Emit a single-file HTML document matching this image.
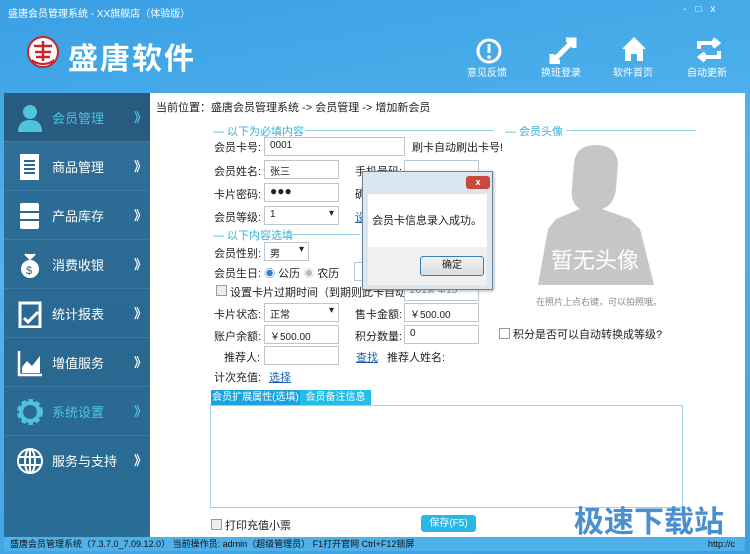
<!DOCTYPE html>
<html><head><meta charset="utf-8"><style>
*{margin:0;padding:0;box-sizing:border-box}
body{width:750px;height:554px;overflow:hidden;position:relative;font-family:"Liberation Sans","Noto Sans CJK SC",sans-serif;font-size:11px;color:#222;background:linear-gradient(170deg,#3aa0e4 0%,#52b4ee 40%,#3c9fe0 100%)}
.a{position:absolute}
.side{left:4px;top:93px;width:146px;height:444px;background:linear-gradient(180deg,#2f6f99,#2a6890 60%,#2a6d96)}
.it{position:absolute;left:0;width:146px;height:49px;border-bottom:1px solid #3b7aa3;color:#fff;font-size:13px}
.it span{position:absolute;left:48px;top:15px}
.it b{position:absolute;left:130px;top:14px;font-weight:bold;font-size:13px}
.it svg{position:absolute;left:12px;top:11px}
.main{left:150px;top:93px;width:595px;height:444px;background:#fff}
.lbl{position:absolute;font-size:11px;color:#222}
.in{position:absolute;height:19px;border:1px solid #bcc6cf;background:#fff;font-size:10px;padding:2px 5px}
.sel::after{content:"▾";position:absolute;right:4px;top:1px;font-size:10px}
.sec{position:absolute;color:#3bb0d8;font-size:11px}
.line{position:absolute;height:1px;background:#8fd0e8}
.lnk{color:#1a5fb4;text-decoration:underline;position:absolute}
.cb{position:absolute;width:11px;height:11px;border:1px solid #999;background:#eee}
</style></head><body>
<div class="a" style="left:8px;top:5px;color:#fff;font-size:10px">盛唐会员管理系统 - XX旗舰店（体验版）</div>
<div class="a" style="left:683px;top:4px;width:60px;height:14px;color:#fff;font-size:10px;letter-spacing:9px">-□x</div>
<svg class="a" style="left:26px;top:35px" width="34" height="34"><circle cx="17" cy="17" r="15" fill="#fff" stroke="#c8262e" stroke-width="2"/><path d="M8 11h18M9 17h16M10 22h14M17 6v20" stroke="#c8262e" stroke-width="2.5" fill="none"/><path d="M6 24q11 8 22 0v3q-11 6-22 0z" fill="#c8262e"/></svg>
<div class="a" style="left:68px;top:34px;color:#fff;font-size:30px;font-weight:bold;letter-spacing:2px">盛唐软件</div>
<svg class="a" style="left:475px;top:37px" width="28" height="28"><circle cx="14" cy="14" r="11" fill="none" stroke="#fff" stroke-width="3"/><rect x="12.5" y="7" width="3" height="9" fill="#fff"/><circle cx="14" cy="20" r="1.8" fill="#fff"/></svg>
<div class="a" style="left:467px;top:64px;color:#fff;font-size:10px">意见反馈</div>
<svg class="a" style="left:548px;top:36px" width="30" height="28"><path d="M4 26L26 4M18 4h8v8M4 18v8h8" stroke="#fff" stroke-width="5" fill="none"/></svg>
<div class="a" style="left:541px;top:64px;color:#fff;font-size:10px">换班登录</div>
<svg class="a" style="left:620px;top:35px" width="28" height="28"><path d="M14 2L26 14h-3v12h-6v-7h-6v7H5V14H2z" fill="#fff"/></svg>
<div class="a" style="left:613px;top:64px;color:#fff;font-size:10px">软件首页</div>
<svg class="a" style="left:695px;top:37px" width="28" height="26"><path d="M4 12V6h18M18 2l5 4-5 4M24 14v6H6M10 16l-5 4 5 4" stroke="#fff" stroke-width="4" fill="none"/></svg>
<div class="a" style="left:687px;top:64px;color:#fff;font-size:10px">自动更新</div>

<div class="a side">
<div class="it" style="top:0;background:#275b80"><svg width="28" height="28"><circle cx="14" cy="8" r="7" fill="#4ec4dc"/><path d="M2 28q0-12 12-12t12 12z" fill="#4ec4dc"/></svg><span style="color:#4ec4dc">会员管理</span><b style="color:#4ec4dc">》</b></div>
<div class="it" style="top:49px"><svg width="28" height="28"><rect x="4" y="1" width="19" height="26" fill="#fff"/><path d="M8 8h11M8 12h11M8 16h11M8 20h11" stroke="#2a6890" stroke-width="2"/></svg><span>商品管理</span><b>》</b></div>
<div class="it" style="top:98px"><svg width="28" height="28"><rect x="4" y="1" width="19" height="26" rx="2" fill="#fff"/><path d="M4 10h19M4 18h19" stroke="#2a6890" stroke-width="2"/></svg><span>产品库存</span><b>》</b></div>
<div class="it" style="top:147px"><svg width="28" height="28"><circle cx="14" cy="18" r="9" fill="#fff"/><path d="M9 3l5 5 5-5" fill="#fff" stroke="#fff" stroke-width="2"/><text x="10" y="23" font-size="11" fill="#2a6890" font-family="Liberation Sans">$</text></svg><span>消费收银</span><b>》</b></div>
<div class="it" style="top:196px"><svg width="28" height="28"><rect x="4" y="3" width="20" height="24" fill="none" stroke="#fff" stroke-width="3"/><path d="M8 18l4 4 10-10" stroke="#fff" stroke-width="3" fill="none"/></svg><span>统计报表</span><b>》</b></div>
<div class="it" style="top:245px"><svg width="28" height="28"><path d="M3 2v24h23" stroke="#fff" stroke-width="2.5" fill="none"/><path d="M6 24V18l5-6 5 5 8-10v17z" fill="#fff"/></svg><span>增值服务</span><b>》</b></div>
<div class="it" style="top:294px"><svg width="28" height="28"><circle cx="14" cy="14" r="10" fill="none" stroke="#4ec4dc" stroke-width="6" stroke-dasharray="4 2.5"/><circle cx="14" cy="14" r="9" fill="none" stroke="#4ec4dc" stroke-width="4"/></svg><span style="color:#4ec4dc">系统设置</span><b style="color:#4ec4dc">》</b></div>
<div class="it" style="top:343px;border:0"><svg width="28" height="28"><circle cx="14" cy="14" r="12" fill="none" stroke="#fff" stroke-width="2"/><ellipse cx="14" cy="14" rx="5" ry="12" fill="none" stroke="#fff" stroke-width="2"/><path d="M2 10h24M2 18h24M14 2v24" stroke="#fff" stroke-width="2"/></svg><span>服务与支持</span><b>》</b></div>
</div>

<div class="a main">
<div class="lbl" style="left:6px;top:6px">当前位置：盛唐会员管理系统 -&gt; 会员管理 -&gt; 增加新会员</div>
<div class="sec" style="left:63px;top:30px">— 以下为必填内容</div><div class="line" style="left:155px;top:37px;width:188px"></div>
<div class="sec" style="left:355px;top:30px">— 会员头像</div><div class="line" style="left:416px;top:37px;width:130px"></div>
<div class="lbl" style="left:64px;top:46px">会员卡号:</div><div class="in" style="left:114px;top:44px;width:141px">0001</div><div class="lbl" style="left:262px;top:46px">刷卡自动刷出卡号!</div>
<div class="lbl" style="left:64px;top:70px">会员姓名:</div><div class="in" style="left:114px;top:67px;width:75px">张三</div><div class="lbl" style="left:205px;top:70px">手机号码:</div><div class="in" style="left:254px;top:67px;width:75px"></div>
<div class="lbl" style="left:64px;top:93px">卡片密码:</div><div class="in" style="left:114px;top:90px;width:75px;font-size:12px;padding-top:0">●●●</div><div class="lbl" style="left:205px;top:93px">确</div>
<div class="lbl" style="left:64px;top:116px">会员等级:</div><div class="in sel" style="left:114px;top:113px;width:75px">1</div><div class="lnk" style="left:205px;top:116px">设</div>
<div class="sec" style="left:63px;top:134px">— 以下内容选填</div><div class="line" style="left:140px;top:141px;width:70px"></div>
<div class="lbl" style="left:64px;top:152px">会员性别:</div><div class="in sel" style="left:114px;top:149px;width:45px">男</div>
<div class="lbl" style="left:64px;top:172px">会员生日: <span style="color:#3b7fc0">◉</span> 公历 <span style="color:#bbb">◉</span> 农历</div><div class="in" style="left:204px;top:169px;width:10px"></div>
<div class="cb" style="left:66px;top:192px"></div><div class="lbl" style="left:80px;top:191px">设置卡片过期时间（到期则此卡自动失效）</div><div class="in" style="left:254px;top:189px;width:75px;color:#888">2019/ 4/15</div>
<div class="lbl" style="left:64px;top:213px">卡片状态:</div><div class="in sel" style="left:114px;top:210px;width:75px">正常</div><div class="lbl" style="left:205px;top:213px">售卡金额:</div><div class="in" style="left:254px;top:210px;width:75px">￥500.00</div>
<div class="lbl" style="left:64px;top:235px">账户余额:</div><div class="in" style="left:114px;top:232px;width:75px">￥500.00</div><div class="lbl" style="left:205px;top:235px">积分数量:</div><div class="in" style="left:254px;top:232px;width:75px">0</div>
<div class="cb" style="left:349px;top:235px;background:#fff"></div><div class="lbl" style="left:363px;top:233px">积分是否可以自动转换成等级?</div>
<div class="lbl" style="left:74px;top:256px">推荐人:</div><div class="in" style="left:114px;top:253px;width:75px"></div><div class="lnk" style="left:206px;top:256px">查找</div><div class="lbl" style="left:237px;top:256px">推荐人姓名:</div>
<div class="lbl" style="left:64px;top:276px">计次充值:</div><div class="lnk" style="left:119px;top:276px">选择</div>
<!-- avatar -->
<svg class="a" style="left:384px;top:50px" width="124" height="145"><path d="M40 20q2-18 22-18t22 18l-2 26q-2 16-14 20l28 10 10 10 14 56H4l10-56 8-10 24-10q-10-6-8-22z" fill="#c6c6c6"/><text x="17" y="125" font-size="22" fill="#fff" font-family="Noto Sans CJK SC">暂无头像</text></svg>
<div class="a" style="left:386px;top:202px;font-size:9px;color:#888">在照片上点右键，可以拍照哦。</div>
<!-- tabs -->
<div class="a" style="left:61px;top:297px;width:89px;height:15px;background:#1aa3e0;color:#fff;font-size:10px;text-align:center;line-height:15px">会员扩展属性(选填)</div>
<div class="a" style="left:150px;top:297px;width:71px;height:15px;background:#22bde8;color:#fff;font-size:10px;text-align:center;line-height:15px">会员备注信息</div>
<div class="a" style="left:60px;top:312px;width:473px;height:103px;border:1px solid #9fd3e3"></div>
<div class="cb" style="left:61px;top:426px"></div><div class="lbl" style="left:75px;top:424px">打印充值小票</div>
<div class="a" style="left:271px;top:422px;width:55px;height:17px;background:#29b7e6;border-radius:3px;color:#fff;font-size:10px;text-align:center;line-height:17px">保存(F5)</div>
<div class="a" style="left:424px;top:408px;font-size:30px;font-weight:bold;color:#4a8fcf;font-family:'Noto Sans CJK SC',sans-serif;line-height:36px">极速下载站</div>
<!-- dialog -->
<div class="a" style="left:212px;top:78px;width:131px;height:119px;border:1px solid #6f8595;background:#dbe7f0;box-shadow:1px 1px 3px rgba(0,0,0,.3)">
<div class="a" style="left:103px;top:4px;width:24px;height:13px;background:#c8493c;border-radius:3px;color:#fff;font-size:9px;text-align:center;line-height:13px;font-weight:bold">x</div>
<div class="a" style="left:5px;top:22px;width:119px;height:53px;background:#fff"><div class="lbl" style="left:4px;top:18px">会员卡信息录入成功。</div></div>
<div class="a" style="left:5px;top:75px;width:119px;height:38px;background:#f0f0f0"><div class="a" style="left:52px;top:9px;width:64px;height:20px;border:1px solid #3c7fb1;border-radius:3px;background:linear-gradient(#f2f2f2,#dcdcdc);text-align:center;line-height:18px;font-size:10px">确定</div></div>
</div>
</div>
<div class="a" style="left:4px;top:537px;width:741px;height:14px;background:#4fb1ea;font-size:9px;color:#111;line-height:14px;padding-left:6px;white-space:nowrap">盛唐会员管理系统（7.3.7.0_7.09.12.0） 当前操作员: admin（超级管理员） F1打开官网 Ctrl+F12锁屏</div>
<div class="a" style="left:708px;top:539px;font-size:9px;color:#111">http://c</div>
</body></html>
